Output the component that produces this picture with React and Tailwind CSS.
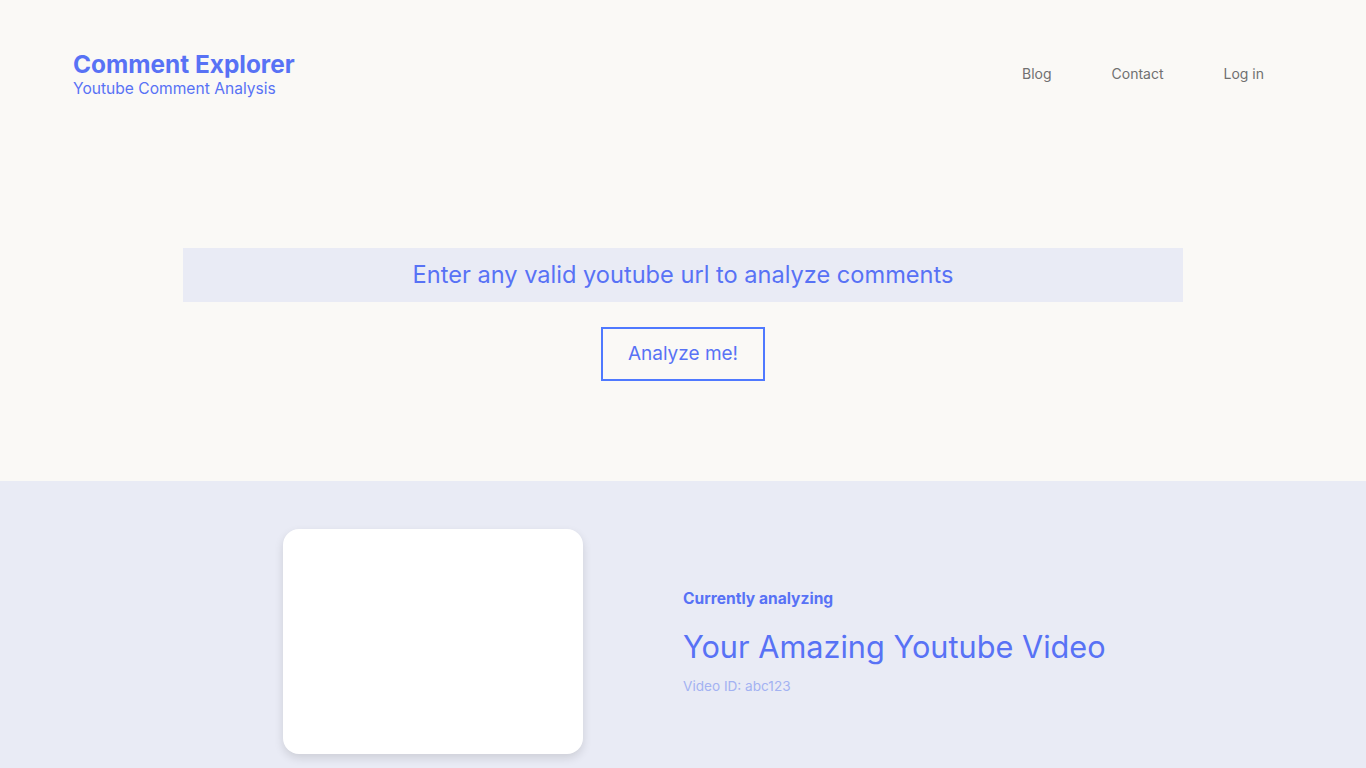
import React from "react";

export default function App() {
  return (
    <div className="min-h-screen bg-[#e9ebf5] font-['Inter',sans-serif]">
      <section className="h-[481px] bg-[#faf9f6] flex flex-col">
        <header className="flex items-center justify-between pt-12 pl-[73px] pr-[102px]">
          <div className="flex flex-col">
            <span className="text-[24.4px] leading-8 font-bold text-[#5872f5]">Comment Explorer</span>
            <span className="text-[15.6px] leading-5 -mt-px text-[#5872f5]">Youtube Comment Analysis</span>
          </div>
          <nav className="flex items-center gap-[60px] text-[14px] text-[#707070]">
            <a>Blog</a>
            <a>Contact</a>
            <a>Log in</a>
          </nav>
        </header>
        <div className="flex flex-col items-center mt-[149px]">
          <div className="w-[1000px] h-[54px] bg-[#e9ebf5] flex items-center justify-center text-[23.6px] text-[#5872f5]">
            Enter any valid youtube url to analyze comments
          </div>
          <button className="mt-[25px] w-[164px] h-[54px] border-2 border-[#4f79ff] text-[19px] text-[#5872f5] flex items-center justify-center">
            Analyze me!
          </button>
        </div>
      </section>
      <section className="pt-12 pb-4">
        <div className="w-[800px] mx-auto flex items-center gap-[100px]">
          <div className="w-[300px] h-[225px] shrink-0 bg-white rounded-2xl shadow-[0_4px_10px_rgba(0,0,0,0.12)]" />
          <div className="flex flex-col whitespace-nowrap">
            <span className="text-[15.6px] leading-6 font-bold text-[#5872f5]">Currently analyzing</span>
            <span className="mt-4 text-[30.7px] leading-10 text-[#5872f5]">Your Amazing Youtube Video</span>
            <span className="mt-[9px] text-[13.6px] leading-5 text-[#a3b2f2]">Video ID: abc123</span>
          </div>
        </div>
      </section>
    </div>
  );
}
